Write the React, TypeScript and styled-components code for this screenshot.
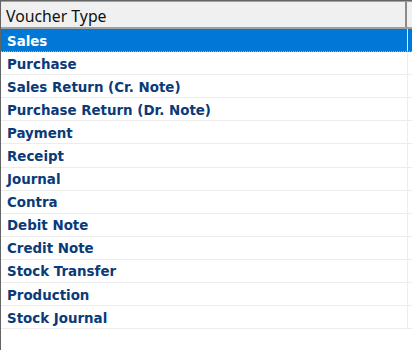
import styled, { createGlobalStyle } from "styled-components";

const voucherTypes = [
  "Sales",
  "Purchase",
  "Sales Return (Cr. Note)",
  "Purchase Return (Dr. Note)",
  "Payment",
  "Receipt",
  "Journal",
  "Contra",
  "Debit Note",
  "Credit Note",
  "Stock Transfer",
  "Production",
  "Stock Journal",
];

const GlobalStyle = createGlobalStyle`
  html, body {
    margin: 0;
    padding: 0;
    background: #ffffff;
  }
  body {
    font-family: "Noto Sans", "Open Sans", sans-serif;
  }
`;

const Grid = styled.div`
  width: 412px;
  height: 350px;
  box-sizing: border-box;
  border-top: 1px solid #646464;
  border-left: 1px solid #646464;
  background: #ffffff;
  overflow: hidden;
`;

const HeaderRow = styled.div`
  display: grid;
  grid-template-columns: 406px 1fr;
  height: 28px;
  box-sizing: border-box;
  border-top: 1px solid #a0a0a0;
  border-bottom: 2px solid #a0a0a0;
  background: #f0f0f0;
`;

const HeaderCell = styled.div`
  display: flex;
  align-items: center;
  padding: 2px 0 0 5px;
  border-right: 2px solid #8a8a8a;
  font-size: 15.8px;
  color: #111111;
`;

const Row = styled.div<{ $selected?: boolean }>`
  display: grid;
  grid-template-columns: 407px 1fr;
  height: 23.1px;
  box-sizing: border-box;
  background: ${(p) => (p.$selected ? "#0078d7" : "#ffffff")};
  border-bottom: ${(p) =>
    p.$selected ? "1px dotted #f0a040" : "1px solid #ececec"};
`;

const Cell = styled.div<{ $selected?: boolean }>`
  display: flex;
  align-items: center;
  padding: 2px 0 0 6px;
  border-right: 1px solid ${(p) => (p.$selected ? "#e8e8e8" : "#ececec")};
  font-family: "DejaVu Sans", "Noto Sans", sans-serif;
  font-size: 13.4px;
  font-weight: 700;
  color: ${(p) => (p.$selected ? "#ffffff" : "#0a3a78")};
  white-space: nowrap;
`;

export default function App() {
  return (
    <>
      <GlobalStyle />
      <Grid>
        <HeaderRow>
          <HeaderCell>Voucher Type</HeaderCell>
          <div />
        </HeaderRow>
        {voucherTypes.map((name, i) => (
          <Row key={name} $selected={i === 0}>
            <Cell $selected={i === 0}>{name}</Cell>
            <div />
          </Row>
        ))}
      </Grid>
    </>
  );
}
